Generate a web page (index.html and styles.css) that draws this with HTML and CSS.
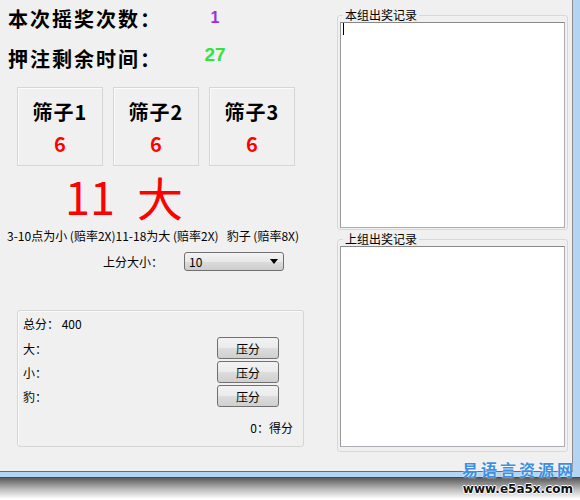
FILE: index.html
```html
<!DOCTYPE html>
<html lang="zh-CN">

<head>
  <meta charset="UTF-8" />
  <title>摇骰子</title>
  <link rel="stylesheet" href="styles.css">
</head>

<body>

  <div class="frame">
    <div class="window">

      <div class="game">
        <div class="stat">
          <span class="stat-label">本次摇奖次数：</span>
          <span class="stat-value round">1</span>
        </div>
        <div class="stat">
          <span class="stat-label">押注剩余时间：</span>
          <span class="stat-value timer">27</span>
        </div>

        <div class="dice-row">
          <div class="die">
            <div class="die-name">筛子1</div>
            <div class="die-point">6</div>
          </div>
          <div class="die">
            <div class="die-name">筛子2</div>
            <div class="die-point">6</div>
          </div>
          <div class="die">
            <div class="die-name">筛子3</div>
            <div class="die-point">6</div>
          </div>
        </div>

        <div class="result">
          <span class="result-sum">11</span>
          <span class="result-size">大</span>
        </div>

        <p class="rules">3-10点为小 (赔率2X)11-18为大 (赔率2X)   豹子 (赔率8X)</p>

        <div class="stake-row">
          <span class="stake-label">上分大小：</span>
          <div class="select">
            <span>10</span>
            <span class="arrow"></span>
          </div>
        </div>

        <div class="score-box">
          <div class="total">总分： 400</div>
          <div class="bet-row"><span>大：</span><button class="btn">压分</button></div>
          <div class="bet-row"><span>小：</span><button class="btn">压分</button></div>
          <div class="bet-row"><span>豹：</span><button class="btn">压分</button></div>
          <div class="gain">0：得分</div>
        </div>
      </div>

      <div class="records">
        <fieldset class="group">
          <legend>本组出奖记录</legend>
          <div class="record-box current"><span class="caret"></span></div>
        </fieldset>
        <fieldset class="group last">
          <legend>上组出奖记录</legend>
          <div class="record-box previous"></div>
        </fieldset>
      </div>

    </div>
  </div>
  <div class="shadow"></div>

  <div class="watermark">
    <div class="wm-name">易语言资源网</div>
    <div class="wm-url">www.e5a5x.com</div>
  </div>

</body>

</html>
```

FILE: styles.css
```css
body {
  margin: 0;
  width: 580px;
  height: 500px;
  overflow: hidden;
  position: relative;
  background: #fff;
  color: #000;
  font-family: "Noto Sans CJK SC", "Liberation Sans", sans-serif;
  font-size: 12px;
}

/* window frame */
.frame {
  background: #b3d4f2;
  padding: 0 7px 5px 0;
  border-bottom: 1px solid #4a4a4a;
}

.window {
  display: flex;
  height: 471px;
  background: #f0f0f0;
  border-right: 1px solid #8c8c8c;
  border-bottom: 1px solid #6a6a6a;
}

.shadow {
  height: 21px;
  background: linear-gradient(#5a5a5a, #bdbdbd 55%, #fff);
}

/* left side */
.game {
  width: 330px;
  padding-top: 7px;
}

.stat {
  display: flex;
  align-items: flex-start;
  height: 24px;
  margin-left: 8px;
}

.stat + .stat {
  margin-top: 16px;
}

.stat-label {
  width: 192px;
  font-size: 20px;
  font-weight: bold;
  line-height: 24px;
  letter-spacing: 2px;
}

.stat-value {
  width: 30px;
  text-align: center;
  font-family: "Liberation Sans", sans-serif;
  font-weight: bold;
}

.round {
  color: #9b30e0;
  font-size: 16px;
  line-height: 16px;
  margin-top: 3px;
}

.timer {
  color: #33e433;
  font-size: 19px;
  line-height: 19px;
  margin-top: -2px;
}

.dice-row {
  display: flex;
  gap: 10px;
  margin: 16px 0 0 17px;
}

.die {
  width: 86px;
  height: 79px;
  box-sizing: border-box;
  border: 1px solid #d6d6d6;
  box-shadow: inset 1px 1px #fbfbfb;
  text-align: center;
  padding-top: 12px;
}

.die-name {
  font-size: 20px;
  font-weight: bold;
  line-height: 24px;
  letter-spacing: 1px;
}

.die-point {
  margin-top: 8px;
  font-size: 20px;
  font-weight: bold;
  line-height: 24px;
  color: #f00;
}

.result {
  display: flex;
  margin: 5px 0 0 65px;
  font-size: 45px;
  line-height: 50px;
  color: #f00;
}

.result-size {
  margin-left: 22px;
  font-size: 46px;
}

.rules {
  margin: 7px 0 0 7px;
  line-height: 16px;
  white-space: pre;
}

.stake-row {
  display: flex;
  align-items: center;
  height: 19px;
  margin: 8px 0 0 103px;
}

.stake-label {
  width: 81px;
}

.select {
  display: flex;
  align-items: center;
  justify-content: space-between;
  width: 100px;
  height: 19px;
  box-sizing: border-box;
  padding: 0 5px 0 4px;
  border: 1px solid #707070;
  border-radius: 3px;
  background: linear-gradient(#f3f3f3, #e8e8e8 50%, #dcdcdc 51%, #cdcdcd);
  line-height: 16px;
}

.arrow {
  border-top: 5px solid #000;
  border-left: 4px solid transparent;
  border-right: 4px solid transparent;
}

.score-box {
  width: 287px;
  height: 137px;
  box-sizing: border-box;
  margin: 39px 0 0 17px;
  padding: 5px 10px 0 5px;
  border: 1px solid #d5d5d5;
  border-radius: 3px;
  box-shadow: inset 1px 1px #fafafa;
}

.total {
  line-height: 16px;
}

.bet-row {
  display: flex;
  justify-content: space-between;
  align-items: center;
  height: 22px;
  margin-top: 2px;
  padding-right: 14px;
}

.total + .bet-row {
  margin-top: 5px;
}

.btn {
  width: 62px;
  height: 22px;
  padding: 0;
  border: 1px solid #707070;
  border-radius: 3px;
  background: linear-gradient(#f2f2f2, #ebebeb 50%, #dddddd 51%, #cfcfcf);
  font-family: inherit;
  font-size: 12px;
  color: #000;
}

.gain {
  margin-top: 13px;
  text-align: right;
  line-height: 16px;
}

/* right side */
.records {
  width: 231px;
  margin-left: 7px;
  padding-top: 8px;
}

.group {
  margin: 0;
  padding: 0 2px 1px;
  min-width: 0;
  border: 1px solid #d5d9dd;
  border-radius: 3px;
}

.group.last {
  margin-top: 2px;
  padding-bottom: 4px;
}

.group legend {
  margin-left: 3px;
  padding: 0 2px;
  line-height: 14px;
}

.record-box {
  box-sizing: border-box;
  background: #fff;
  border: 1px solid #abadb3;
  border-top-color: #888;
  border-left-color: #999;
}

.record-box.current {
  height: 206px;
}

.record-box.previous {
  height: 201px;
}

.caret {
  display: block;
  width: 1px;
  height: 12px;
  margin: 0 0 0 2px;
  background: #000;
}

/* watermark over the corner */
.watermark {
  position: absolute;
  right: 4px;
  bottom: 3px;
  text-align: right;
}

.wm-name {
  font-size: 16px;
  font-weight: bold;
  letter-spacing: 3px;
  line-height: 18px;
  margin-bottom: 4px;
  color: #3f8fe0;
  text-shadow: 0 0 2px #fff;
}

.wm-url {
  padding-right: 3px;
  font-family: "DejaVu Sans", sans-serif;
  font-size: 12px;
  font-weight: bold;
  line-height: 15px;
  color: #111;
  text-shadow: 1px 0 #fff, -1px 0 #fff, 0 1px #fff, 0 -1px #fff;
}
```
